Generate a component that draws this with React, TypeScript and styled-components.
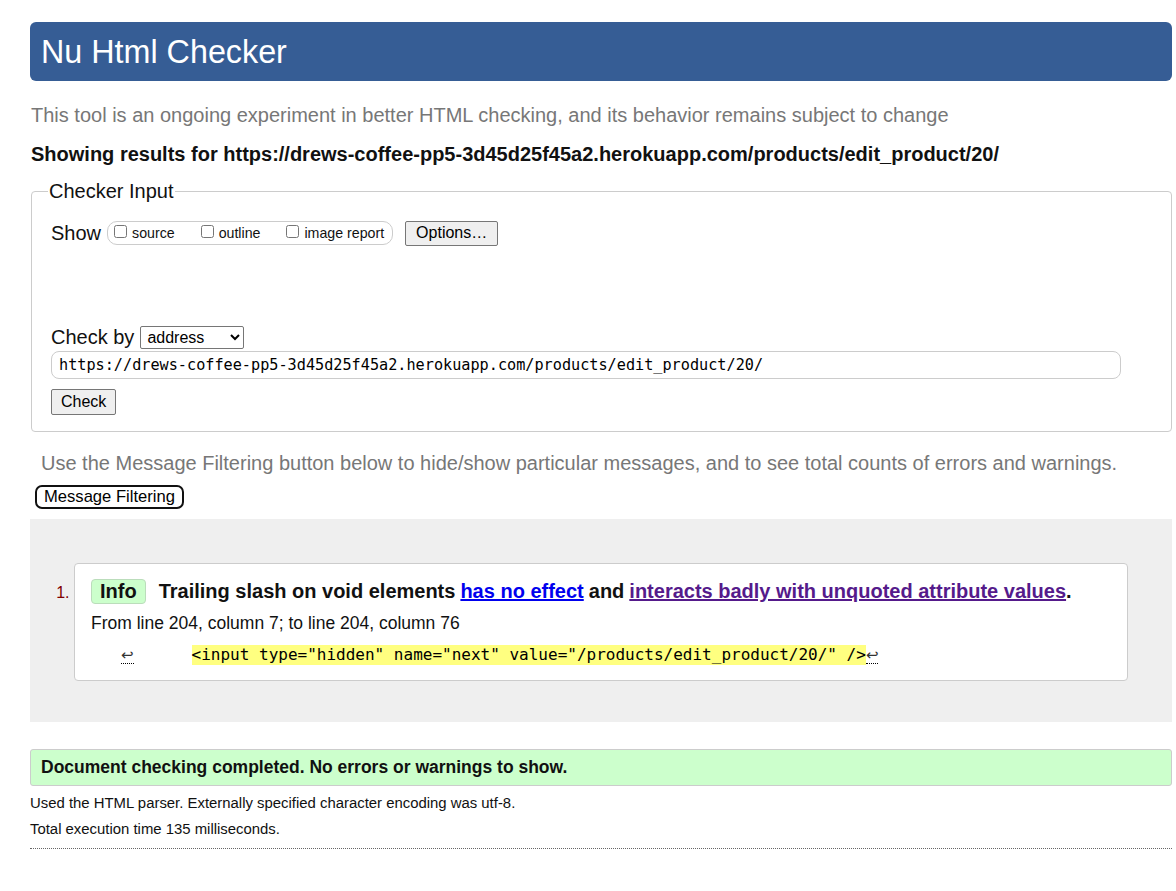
import styled, { createGlobalStyle } from "styled-components";

const GlobalStyle = createGlobalStyle`
  body {
    margin: 0;
    background: #fff;
    font-family: "Liberation Sans", Arial, sans-serif;
    color: #111;
  }
`;

const Page = styled.div`
  margin-left: 30px;
  width: 1142px;
  padding-top: 22px;
`;

const Header = styled.h1`
  margin: 0;
  height: 59px;
  background: #365d95;
  border-radius: 6px;
  color: #fff;
  font-weight: normal;
  font-size: 32.3px;
  line-height: 60px;
  padding-left: 11px;
`;

const Intro = styled.p`
  margin: 22px 0 0 1px;
  color: #777;
  font-size: 20px;
  line-height: 24px;
`;

const Results = styled.p`
  margin: 15px 0 0 1px;
  font-weight: bold;
  font-size: 20px;
  line-height: 24px;
`;

const Fieldset = styled.fieldset`
  margin: 14px 0 0 1px;
  padding: 17px 20px 16px 19px;
  border: 1px solid #ccc;
  border-radius: 4px;
  min-width: 0;
`;

const Legend = styled.legend`
  font-size: 20px;
  padding: 0 1px;
  margin-left: -3px;
`;

const Row = styled.div`
  display: flex;
  align-items: center;
  font-size: 20px;
`;

const ShowRow = styled(Row)`
  height: 26px;
`;

const Label = styled.span`
  margin-right: 6px;
`;

const CheckGroup = styled.span`
  display: inline-flex;
  align-items: center;
  height: 22px;
  border: 1px solid #ccc;
  border-radius: 10px;
  padding: 0 8px 0 6px;
  gap: 26px;
  font-size: 14.2px;
`;

const CheckItem = styled.label`
  display: inline-flex;
  align-items: center;
  gap: 5px;
  input {
    margin: 0 0 4px 0;
    width: 13px;
    height: 13px;
  }
`;

const Btn = styled.button`
  font-family: "Liberation Sans", Arial, sans-serif;
  font-size: 16px;
  background: #efefef;
  border: 1px solid #767676;
  border-radius: 2px;
  padding: 1px 9px;
  color: #000;
  height: 25px;
`;

const OptionsBtn = styled(Btn)`
  margin-left: 12px;
  padding: 1px 10px;
`;

const CheckByRow = styled(Row)`
  margin-top: 80px;
`;

const Select = styled.select`
  font-family: "Liberation Sans", Arial, sans-serif;
  font-size: 16px;
  width: 104px;
  height: 23px;
  border: 1px solid #767676;
  border-radius: 2px;
  background: #fff;
  color: #000;
  padding: 0 2px;
`;

const UrlInput = styled.input`
  display: block;
  box-sizing: border-box;
  margin-top: 2px;
  width: 1070px;
  height: 28px;
  border: 1px solid #ccc;
  border-radius: 8px;
  padding: 0 7px;
  font-family: "DejaVu Sans Mono", "Liberation Mono", monospace;
  font-size: 15.2px;
  color: #000;
`;

const CheckBtn = styled(Btn)`
  display: block;
  margin-top: 10px;
  height: 26px;
`;

const FilterNote = styled.p`
  margin: 19px 0 0 11px;
  color: #777;
  font-size: 20px;
  line-height: 24px;
`;

const FilterBtn = styled.button`
  margin: 10px 0 0 5px;
  font-family: "Liberation Sans", Arial, sans-serif;
  font-size: 16.6px;
  background: #fff;
  border: 2px solid #111;
  border-radius: 7px;
  padding: 0 7px;
  height: 24px;
  color: #000;
`;

const Messages = styled.ol`
  margin: 10px 0 0 0;
  padding: 44px 44px 41px 44px;
  background: #efefef;
  list-style-position: outside;
`;

const Message = styled.li`
  background: #fff;
  border: 1px solid #ccc;
  border-radius: 4px;
  padding: 14px 16px 15px 16px;
  font-size: 16px;
  &::marker {
    color: #800000;
    font-size: 16px;
  }
`;

const MsgLine = styled.p`
  margin: 0;
  font-size: 20px;
  font-weight: bold;
  line-height: 26px;
  display: flex;
  align-items: center;
`;

const Badge = styled.span`
  display: inline-block;
  background: #ccffcc;
  border: 1px solid #bbddbb;
  border-radius: 4px;
  padding: 0 8px;
  margin-right: 13px;
  line-height: 23px;
`;

const MsgLink = styled.a<{ $visited?: boolean }>`
  color: ${(p) => (p.$visited ? "#551a8b" : "#0000ee")};
  text-decoration: underline;
  margin-left: 5px;
  margin-right: ${(p) => (p.$visited ? 0 : 5)}px;
`;

const Location = styled.p`
  margin: 8px 0 0 0;
  font-size: 17.5px;
  line-height: 22px;
`;

const Extract = styled.p`
  margin: 11px 0 0 0;
  font-family: "DejaVu Sans Mono", "Liberation Mono", monospace;
  font-size: 16px;
  line-height: 20px;
  display: flex;
  align-items: center;
`;

const Lf = styled.span<{ $gap?: number }>`
  font-family: "DejaVu Sans", sans-serif;
  font-size: 15px;
  color: #333;
  border-bottom: 1px dotted #000;
  margin-left: ${(p) => p.$gap ?? 0}px;
  line-height: 16px;
`;

const Tab = styled.span`
  display: inline-block;
  width: 58px;
`;

const Mark = styled.mark`
  background: #ffff80;
  color: #000;
`;

const Success = styled.p`
  margin: 27px 0 0 0;
  background: #ccffcc;
  border: 1px solid #ccc;
  border-radius: 3px;
  padding: 0 10px;
  height: 35px;
  line-height: 35px;
  font-weight: bold;
  font-size: 17.5px;
`;

const Detail = styled.p`
  margin: 0;
  font-size: 14.9px;
  line-height: 26px;
`;

const Stats = styled.div`
  margin-top: 4px;
  border-bottom: 1px dotted #666;
  padding-bottom: 6px;
`;

export default function App() {
  const url =
    "https://drews-coffee-pp5-3d45d25f45a2.herokuapp.com/products/edit_product/20/";
  return (
    <>
      <GlobalStyle />
      <Page>
        <Header>Nu Html Checker</Header>
        <Intro>
          This tool is an ongoing experiment in better HTML checking, and its
          behavior remains subject to change
        </Intro>
        <Results>Showing results for {url}</Results>
        <Fieldset>
          <Legend>Checker Input</Legend>
          <ShowRow>
            <Label>Show</Label>
            <CheckGroup>
              <CheckItem>
                <input type="checkbox" />
                source
              </CheckItem>
              <CheckItem>
                <input type="checkbox" />
                outline
              </CheckItem>
              <CheckItem>
                <input type="checkbox" />
                image report
              </CheckItem>
            </CheckGroup>
            <OptionsBtn>Options…</OptionsBtn>
          </ShowRow>
          <CheckByRow>
            <Label>Check by</Label>
            <Select defaultValue="address">
              <option value="address">address</option>
              <option value="file">file upload</option>
              <option value="text">text input</option>
            </Select>
          </CheckByRow>
          <UrlInput defaultValue={url} />
          <CheckBtn>Check</CheckBtn>
        </Fieldset>
        <FilterNote>
          Use the Message Filtering button below to hide/show particular
          messages, and to see total counts of errors and warnings.
        </FilterNote>
        <FilterBtn>Message Filtering</FilterBtn>
        <Messages>
          <Message>
            <MsgLine>
              <Badge>Info</Badge>
              Trailing slash on void elements
              <MsgLink href="#">has no effect</MsgLink>
              and
              <MsgLink href="#" $visited>
                interacts badly with unquoted attribute values
              </MsgLink>
              .
            </MsgLine>
            <Location>From line 204, column 7; to line 204, column 76</Location>
            <Extract>
              <Lf $gap={30}>↩</Lf>
              <Tab />
              <Mark>{'<input type="hidden" name="next" value="/products/edit_product/20/" />'}</Mark>
              <Lf>↩</Lf>
            </Extract>
          </Message>
        </Messages>
        <Success>Document checking completed. No errors or warnings to show.</Success>
        <Stats>
          <Detail>Used the HTML parser. Externally specified character encoding was utf-8.</Detail>
          <Detail>Total execution time 135 milliseconds.</Detail>
        </Stats>
      </Page>
    </>
  );
}
